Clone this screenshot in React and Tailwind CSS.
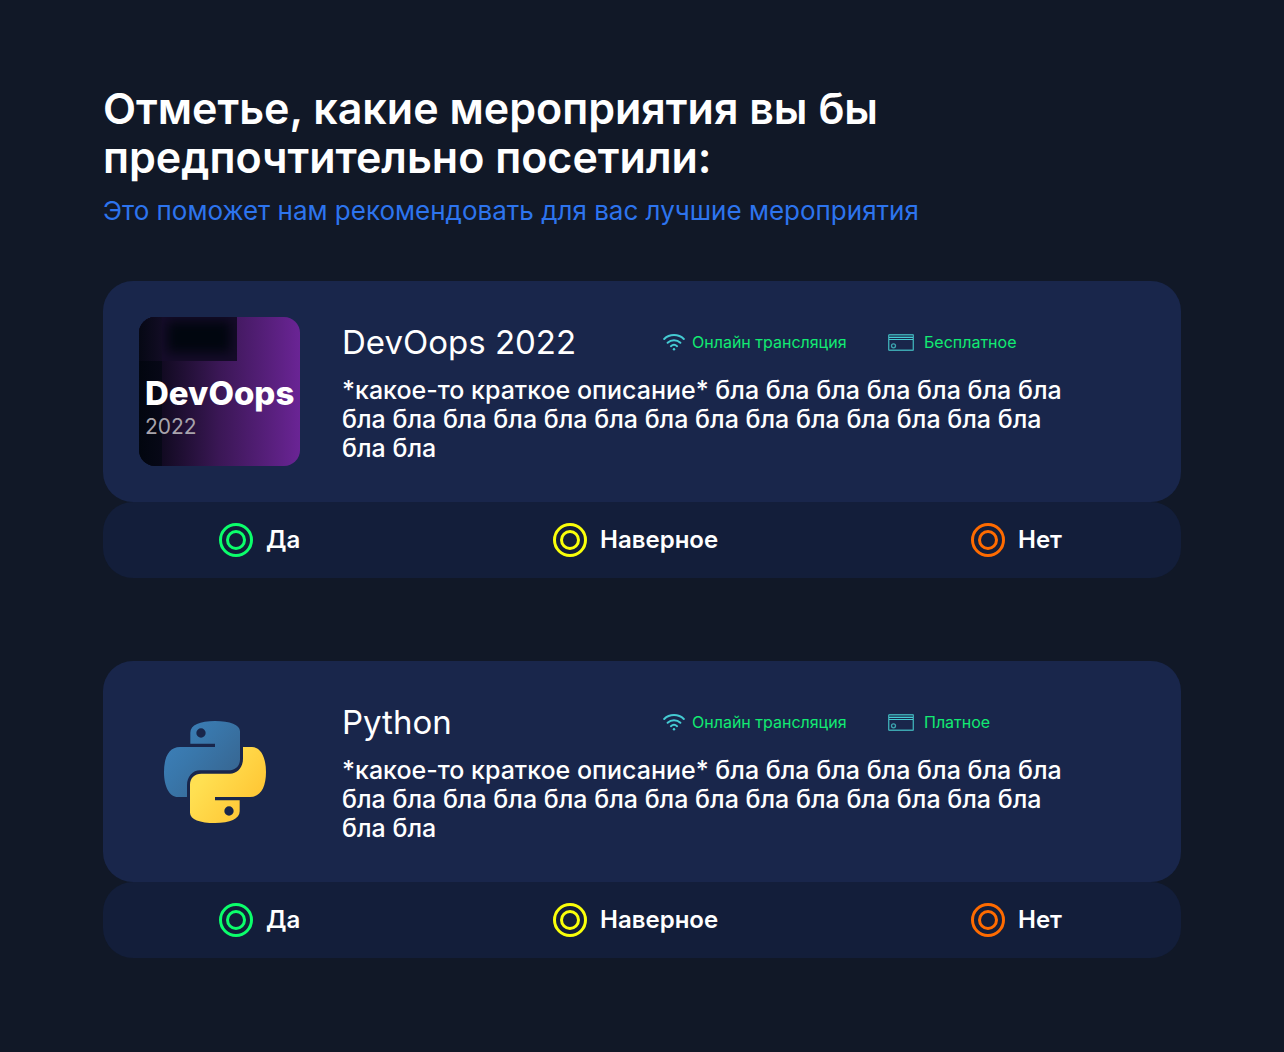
import React from "react";

const DESCRIPTION =
  "*какое-то краткое описание* бла бла бла бла бла бла бла бла бла бла бла бла бла бла бла бла бла бла бла бла бла бла бла";

const EVENTS = [
  { id: "devoops", title: "DevOops 2022", price: "Бесплатное", Logo: DevOopsLogo },
  { id: "python", title: "Python", price: "Платное", Logo: PythonLogo },
];

const OPTIONS = [
  { value: "yes", label: "Да", color: "text-[#0bff6b]" },
  { value: "maybe", label: "Наверное", color: "text-[#faff0a]" },
  { value: "no", label: "Нет", color: "text-[#ff6b00]" },
];

function DevOopsLogo() {
  return (
    <div className="relative flex h-[149px] w-[161px] flex-col justify-center overflow-hidden rounded-2xl bg-linear-to-r from-[#04050f] via-[#3b1756] to-[#6a2495] pl-1.5">
      <div className="absolute inset-y-0 left-0 w-[23px] bg-linear-to-r from-[#02060f] to-[#070817]" />
      <div className="absolute top-0 left-0 h-11 w-[98px] overflow-hidden bg-[#160c2a]">
        <div className="absolute top-1 left-7 h-8 w-16 bg-[#01060f] blur-[6px]" />
        <div className="absolute inset-y-0 left-0 w-[23px] bg-linear-to-r from-[#060814] to-[#120c24]" />
      </div>
      <div className="relative mt-8 text-[33px] leading-[38px] font-extrabold text-white">DevOops</div>
      <div className="relative text-[21px] leading-[29px] text-[#a8a4ac]">2022</div>
    </div>
  );
}

const SNAKE =
  "M195 33C150 33 121 45 121 68V101H195V111H90C58 111 42 140 42 186C42 230 58 261 84 261H111V226C111 200 128 181 150 181H236C256 181 270 168 270 148V64C270 44 240 33 195 33ZM153 55a14 14 0 1 1 0 28a14 14 0 1 1 0-28Z";

function PythonLogo() {
  return (
    <svg viewBox="42 33 306 306" className="ml-[25px] size-[102px]" role="img" aria-label="Python">
      <defs>
        <linearGradient id="snakeBlue" gradientUnits="userSpaceOnUse" x1="60" y1="60" x2="250" y2="220">
          <stop offset="0" stopColor="#3c80ba" />
          <stop offset="0.4" stopColor="#3977ab" />
          <stop offset="1" stopColor="#376590" />
        </linearGradient>
        <linearGradient id="snakeYellow" gradientUnits="userSpaceOnUse" x1="235" y1="165" x2="75" y2="50">
          <stop offset="0" stopColor="#ffe052" />
          <stop offset="1" stopColor="#ffc331" />
        </linearGradient>
      </defs>
      <path d={SNAKE} fill="url(#snakeBlue)" fillRule="evenodd" />
      <path d={SNAKE} fill="url(#snakeYellow)" fillRule="evenodd" transform="rotate(180 195 186)" />
    </svg>
  );
}

function WifiIcon() {
  return (
    <svg viewBox="0 0 22 17" className="h-[17px] w-[22px] shrink-0" fill="none" stroke="#45cbd3" strokeWidth="2" strokeLinecap="round" aria-hidden="true">
      <path d="M1.200 5C6.500-.2 15.500-.2 20.800 5" />
      <path d="M4.600 8.700C8.200 5.300 13.800 5.300 17.400 8.700" />
      <path d="M7.900 12.200C9.700 10.600 12.300 10.600 14.100 12.200" />
      <circle cx="11" cy="15.300" r="1.200" fill="#45cbd3" stroke="none" />
    </svg>
  );
}

function CardIcon() {
  return (
    <svg viewBox="0 0 26 17" className="h-[17px] w-[26px] shrink-0" fill="none" stroke="#3ca5b0" aria-hidden="true">
      <rect x="0.700" y="0.700" width="24.600" height="15.600" rx="0.600" strokeWidth="1.400" />
      <path d="M1 2.200H25" stroke="#2b7587" />
      <path d="M1 3.500H25M1 5.500H25" stroke="#45cbd3" />
      <circle cx="5.500" cy="11.800" r="2" strokeWidth="1.300" />
    </svg>
  );
}

function Option({ event, value, label, color }) {
  return (
    <label className="flex cursor-pointer items-center gap-[13px]">
      <input
        type="radio"
        name={event}
        value={value}
        className={`m-0 grid size-[34px] shrink-0 cursor-pointer appearance-none place-items-center rounded-full border-[3px] border-current before:block before:size-5 before:rounded-full before:border-[3px] before:border-current before:content-[''] checked:before:bg-current ${color}`}
      />
      <span className="text-2xl font-semibold text-white">{label}</span>
    </label>
  );
}

function EventCard({ id, title, price, Logo }) {
  return (
    <article>
      <div className="flex min-h-[221px] items-center rounded-[30px] bg-[#19264b] pr-9 pl-9">
        <div className="w-[203px] shrink-0">
          <Logo />
        </div>
        <div className="min-w-0 flex-1 pt-0.5">
          <div className="flex items-center">
            <h2 className="w-[321px] shrink-0 text-[33px] leading-[40px] text-white">{title}</h2>
            <div className="flex w-[225px] shrink-0 items-center gap-[7px] text-base text-[#12eb72]">
              <WifiIcon />
              <span className="whitespace-nowrap">Онлайн трансляция</span>
            </div>
            <div className="flex items-center gap-2.5 text-base text-[#12eb72]">
              <CardIcon />
              <span>{price}</span>
            </div>
          </div>
          <p className="mt-3.5 max-w-[736px] text-[25px] leading-[29px] font-medium text-white">{DESCRIPTION}</p>
        </div>
      </div>
      <div
        role="radiogroup"
        aria-label={title}
        className="flex min-h-[76px] items-center justify-between rounded-[30px] bg-[#131e3a] pr-[119px] pl-[116px]"
      >
        {OPTIONS.map((o) => (
          <Option key={o.value} event={id} {...o} />
        ))}
      </div>
    </article>
  );
}

export default function App() {
  return (
    <main className="min-h-screen bg-[#111827] px-[103px] pt-[84px] pb-[94px] font-[Inter,sans-serif]">
      <h1 className="max-w-[900px] text-[43px] leading-[49px] font-semibold text-white">
        Отметье, какие мероприятия вы бы предпочтительно посетили:
      </h1>
      <p className="mt-3.5 text-[26px] leading-[30px] text-[#2d74ee]">
        Это поможет нам рекомендовать для вас лучшие мероприятия
      </p>
      <div className="mt-[55px] flex flex-col gap-[83px]">
        {EVENTS.map((e) => (
          <EventCard key={e.id} {...e} />
        ))}
      </div>
    </main>
  );
}
